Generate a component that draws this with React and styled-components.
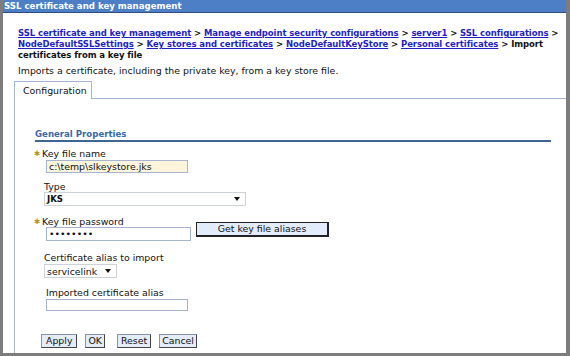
import React from 'react'
import styled, { createGlobalStyle } from 'styled-components'

const GlobalStyle = createGlobalStyle`
  html, body {
    margin: 0;
    padding: 0;
    background: #ffffff;
  }
  * {
    box-sizing: border-box;
  }
`

const Frame = styled.div`
  width: 570px;
  height: 356px;
  display: flex;
  flex-direction: column;
  border-left: 3px solid #7d7d7d;
  border-right: 4px solid #7d7d7d;
  border-bottom: 3px solid #7d7d7d;
  font-family: 'DejaVu Sans', Verdana, sans-serif;
  font-size: 9.4px;
  color: #111;
  overflow: hidden;
`

const TitleBar = styled.div`
  height: 13px;
  background: #4c7fc6;
  border-bottom: 1px solid #2f4f80;
  color: #ffffff;
  font-weight: bold;
  font-size: 8.6px;
  line-height: 12px;
  padding-left: 1px;
  white-space: nowrap;
`

const Body = styled.div`
  flex: 1;
  display: flex;
  flex-direction: column;
  padding: 15px 0 0 11px;
`

const Crumbs = styled.div`
  padding-left: 4px;
  padding-right: 1px;
  font-weight: bold;
  font-size: 8.5px;
  letter-spacing: -0.08px;
  line-height: 11px;
`

const CrumbLink = styled.a`
  color: #1f1fc2;
  text-decoration: underline;
`

const Desc = styled.div`
  padding-left: 4px;
  margin-top: 4px;
  line-height: 11px;
`

const TabRow = styled.div`
  display: flex;
  margin-top: 5px;
`

const Tab = styled.div`
  width: 78px;
  height: 18px;
  padding: 3px 0 0 8px;
  border: 1px solid #a7b4d6;
  border-bottom: none;
  line-height: 11px;
  background: #fff;
`

const TabFill = styled.div`
  flex: 1;
  border-bottom: 1px solid #a7b4d6;
`

const Panel = styled.div`
  flex: 1;
  border-left: 1px solid #a7b4d6;
  padding: 30px 0 0 19px;
  display: flex;
  flex-direction: column;
`

const SectionTitle = styled.div`
  margin-left: 1px;
  margin-right: 15px;
  color: #3a68a8;
  font-weight: bold;
  font-size: 8.6px;
  line-height: 11px;
  border-bottom: 2px solid #3f6592;
`

const Field = styled.div`
  display: flex;
  flex-direction: column;
  align-items: flex-start;
  margin-top: ${({ $gap }) => $gap}px;
  padding-left: ${({ $indent }) => $indent || 0}px;
`

const Label = styled.div`
  line-height: 10px;
  display: flex;
  align-items: center;
  gap: 3px;
`

const Star = styled.span`
  color: #b8902a;
  font-size: 7.5px;
  font-weight: bold;
  width: 5px;
`

const Row = styled.div`
  display: flex;
  align-items: flex-end;
  gap: 5px;
`

const Input = styled.div`
  width: ${({ $w }) => $w}px;
  height: ${({ $h }) => $h || 13}px;
  margin-top: ${({ $mt }) => $mt || 0}px;
  margin-left: ${({ $ml }) => $ml || 0}px;
  border: 1px solid #a7b4d0;
  background: ${({ $bg }) => $bg || '#fff'};
  padding-left: 2px;
  line-height: ${({ $h }) => ($h || 13) - 2}px;
  white-space: nowrap;
`

const Select = styled.div`
  width: ${({ $w }) => $w}px;
  height: 14px;
  margin-top: ${({ $mt }) => $mt || 0}px;
  border: 1px solid #cdd1d8;
  display: flex;
  align-items: center;
  justify-content: space-between;
  padding: 0 5px 0 2px;
`

const Strong = styled.span`
  font-weight: bold;
  font-size: 8.6px;
`

const Caret = styled.span`
  width: 0;
  height: 0;
  border-left: 3.5px solid transparent;
  border-right: 3.5px solid transparent;
  border-top: 4px solid #111;
`

const AliasButton = styled.div`
  width: 133px;
  height: 15px;
  margin-bottom: 4px;
  border: 2px solid #222;
  border-top-width: 1px;
  border-left-width: 1px;
  background: #e3ecfa;
  text-align: center;
  line-height: 12px;
`

const Buttons = styled.div`
  display: flex;
  margin-top: 23px;
  padding-left: 7px;
`

const Button = styled.div`
  height: 14px;
  margin-left: ${({ $ml }) => $ml || 0}px;
  padding: 0 ${({ $pad }) => $pad || 4}px;
  background: #e4ecf8;
  border: 1px solid #8a93a8;
  border-right-color: #444;
  border-bottom-color: #444;
  line-height: 12px;
`

export default function App() {
  return (
    <>
      <GlobalStyle />
      <Frame>
        <TitleBar>SSL certificate and key management</TitleBar>
        <Body>
          <Crumbs>
            <CrumbLink>SSL certificate and key management</CrumbLink> &gt;{' '}
            <CrumbLink>Manage endpoint security configurations</CrumbLink> &gt;{' '}
            <CrumbLink>server1</CrumbLink> &gt; <CrumbLink>SSL configurations</CrumbLink> &gt;{' '}
            <CrumbLink>NodeDefaultSSLSettings</CrumbLink> &gt;{' '}
            <CrumbLink>Key stores and certificates</CrumbLink> &gt;{' '}
            <CrumbLink>NodeDefaultKeyStore</CrumbLink> &gt;{' '}
            <CrumbLink>Personal certificates</CrumbLink> &gt; Import certificates from a key file
          </Crumbs>
          <Desc>Imports a certificate, including the private key, from a key store file.</Desc>
          <TabRow>
            <Tab>Configuration</Tab>
            <TabFill />
          </TabRow>
          <Panel>
            <SectionTitle>General Properties</SectionTitle>
            <Field $gap={7}>
              <Label>
                <Star>✱</Star>Key file name
              </Label>
              <Input $w={142} $ml={12} $mt={1} $bg="#fdf4dc">
                c:\temp\slkeystore.jks
              </Input>
            </Field>
            <Field $gap={9} $indent={10}>
              <Label>Type</Label>
              <Select $w={202}>
                <Strong>JKS</Strong>
                <Caret />
              </Select>
            </Field>
            <Row>
              <Field $gap={11}>
                <Label>
                  <Star>✱</Star>Key file password
                </Label>
                <Input $w={145} $ml={12} $h={14}>
                  ••••••••
                </Input>
              </Field>
              <AliasButton>Get key file aliases</AliasButton>
            </Row>
            <Field $gap={12} $indent={10}>
              <Label>Certificate alias to import</Label>
              <Select $w={73} $mt={1}>
                servicelink
                <Caret />
              </Select>
            </Field>
            <Field $gap={10} $indent={12}>
              <Label>Imported certificate alias</Label>
              <Input $w={142} $mt={1} $h={12} />
            </Field>
            <Buttons>
              <Button>Apply</Button>
              <Button $ml={8} $pad={2}>OK</Button>
              <Button $ml={12} $pad={3}>Reset</Button>
              <Button $ml={8} $pad={2}>Cancel</Button>
            </Buttons>
          </Panel>
        </Body>
      </Frame>
    </>
  )
}
